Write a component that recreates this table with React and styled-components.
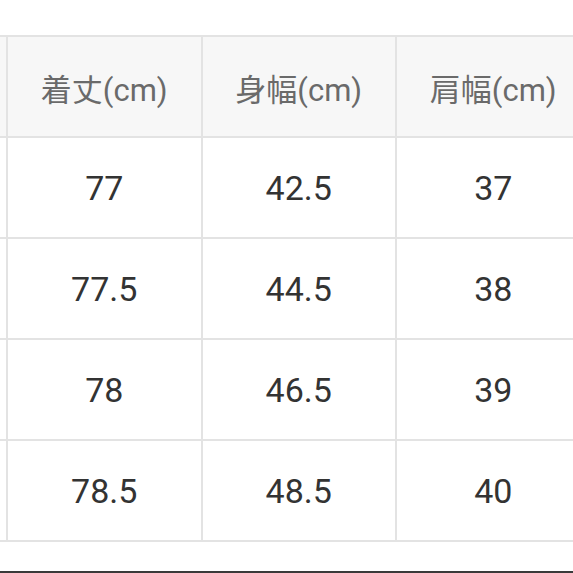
import React from "react";
import styled, { createGlobalStyle } from "styled-components";

const Global = createGlobalStyle`
  html, body { margin: 0; padding: 0; background: #ffffff; }
  body { overflow: hidden; }
`;

const Page = styled.div`
  width: 573px;
  height: 573px;
  overflow: hidden;
  display: flex;
  flex-direction: column;
  font-family: Roboto, "Noto Sans CJK JP", sans-serif;
  background: #fff;
`;

const Table = styled.div`
  margin-top: 35px;
  margin-left: -186.5px;
  display: grid;
  grid-template-columns: repeat(4, 194.5px);
  border-top: 2px solid #e3e3e3;
  width: max-content;
`;

const Cell = styled.div`
  box-sizing: border-box;
  height: 101px;
  display: flex;
  align-items: center;
  justify-content: center;
  border-right: 2px solid #e3e3e3;
  border-bottom: 2px solid #e3e3e3;
  background: ${(p) => (p.$head ? "#f7f7f7" : "#ffffff")};
  color: ${(p) => (p.$head ? "#6a6a6a" : "#333333")};
  font-size: ${(p) => (p.$head ? "31px" : "34px")};
  padding-top: 1px;
`;

const BottomBar = styled.div`
  margin-top: auto;
  height: 2px;
  background: #3a3a3a;
`;

const headers = ["", "着丈(cm)", "身幅(cm)", "肩幅(cm)"];
const rows = [
  ["", "77", "42.5", "37"],
  ["", "77.5", "44.5", "38"],
  ["", "78", "46.5", "39"],
  ["", "78.5", "48.5", "40"],
];

export default function App() {
  return (
    <>
      <Global />
      <Page>
        <Table>
          {headers.map((h, i) => (
            <Cell key={"h" + i} $head>
              {h}
            </Cell>
          ))}
          {rows.map((r, ri) =>
            r.map((c, ci) => <Cell key={ri + "-" + ci}>{c}</Cell>)
          )}
        </Table>
        <BottomBar />
      </Page>
    </>
  );
}
